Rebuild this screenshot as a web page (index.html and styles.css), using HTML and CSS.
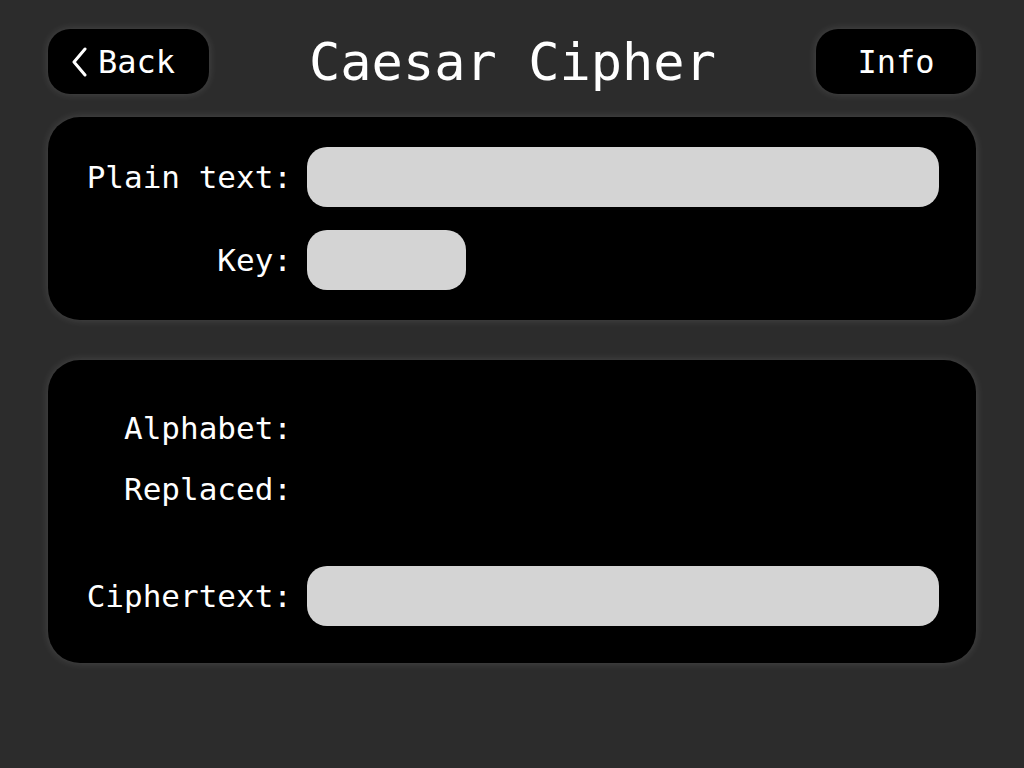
FILE: index.html
```html
<!DOCTYPE html>
<html>
<head>
<meta charset="utf-8">
<link rel="stylesheet" href="styles.css">
</head>
<body>
<div class="app">
  <header class="topbar">
    <button class="btn btn-back">
      <svg class="chev" width="16" height="30" viewBox="0 0 16 30"><polyline points="14,2 3,15 14,28" fill="none" stroke="#fff" stroke-width="3" stroke-linecap="round" stroke-linejoin="round"/></svg>
      <span>Back</span>
    </button>
    <h1 class="title">Caesar Cipher</h1>
    <button class="btn btn-info">Info</button>
  </header>

  <section class="panel panel-input">
    <label class="label">Plain text:</label>
    <div class="field field-wide"></div>
    <label class="label">Key:</label>
    <div class="field field-key"></div>
  </section>

  <section class="panel panel-output">
    <div class="label">Alphabet:</div>
    <div class="value"></div>
    <div class="label">Replaced:</div>
    <div class="value"></div>
    <div class="label cipher-label">Ciphertext:</div>
    <div class="field field-wide cipher-field"></div>
  </section>
</div>
</body>
</html>
```

FILE: styles.css
```css
html, body {
  margin: 0;
  padding: 0;
  background: #2c2c2c;
  width: 1024px;
  height: 768px;
  overflow: hidden;
}
body {
  font-family: "DejaVu Sans Mono", "Liberation Mono", monospace;
  color: #fff;
}
.app {
  padding: 29px 48px 0 48px;
  display: flex;
  flex-direction: column;
}
.topbar {
  display: flex;
  align-items: center;
  justify-content: space-between;
  height: 65px;
}
.btn {
  width: 161px;
  height: 65px;
  border: none;
  border-radius: 22px;
  background: #000;
  color: #fff;
  font-family: inherit;
  font-size: 32px;
  display: flex;
  align-items: center;
  justify-content: center;
  box-shadow: 0 0 8px rgba(255,255,255,0.14);
  padding: 0;
}
.btn-back {
  justify-content: flex-start;
  padding-left: 23px;
  gap: 11px;
}
.btn-info {
  width: 160px;
}
.chev { display: block; }
.title {
  margin: 0;
  font-weight: normal;
  font-size: 52px;
  line-height: 62px;
  letter-spacing: 0;
}
.panel {
  margin-top: 23px;
  background: #000;
  border-radius: 32px;
  box-shadow: 0 0 9px rgba(255,255,255,0.14);
  display: grid;
  grid-template-columns: 207px 1fr;
  column-gap: 15px;
  padding: 30px 37px 30px 37px;
  align-items: center;
}
.panel-input {
  grid-auto-rows: 60px;
  row-gap: 23px;
}
.panel-output {
  margin-top: 40px;
  padding-top: 37px;
  padding-bottom: 37px;
  grid-template-rows: 61px 61px 107px;
}
.label {
  font-size: 31px;
  text-align: right;
  line-height: 60px;
}
.field {
  height: 60px;
  background: #d4d4d4;
  border-radius: 20px;
}
.field-key {
  width: 159px;
}
.panel-output .cipher-label,
.panel-output .cipher-field { align-self: end; }
```
